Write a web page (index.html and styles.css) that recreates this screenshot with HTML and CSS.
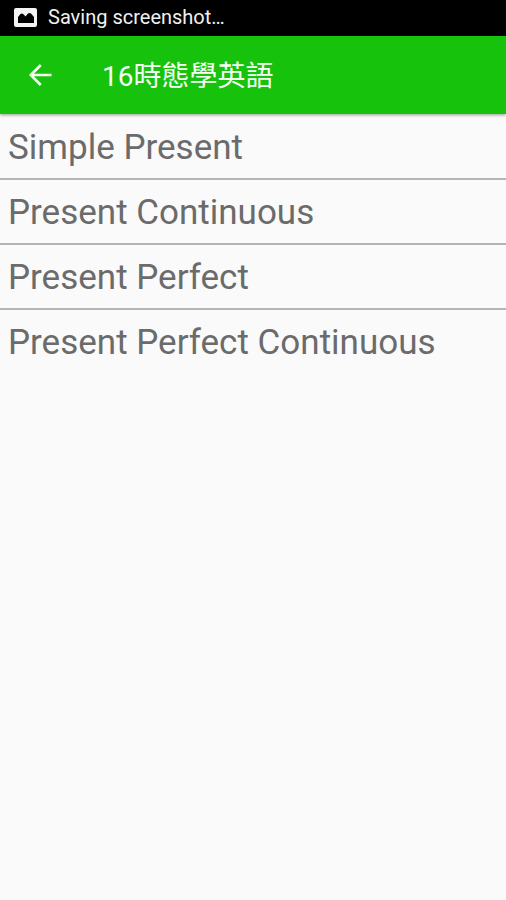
FILE: index.html
```html
<!DOCTYPE html>
<html lang="zh-Hant">
<head>
<meta charset="utf-8">
<meta name="viewport" content="width=device-width, initial-scale=1">
<title>16時態學英語</title>
<link rel="stylesheet" href="styles.css">
</head>
<body>
<div class="status" lang="en">
  <svg class="status-icon" viewBox="0 0 23 19" aria-hidden="true"><path fill="#f4f4f4" fill-rule="evenodd" d="M2 0h19a2 2 0 0 1 2 2v15a2 2 0 0 1-2 2H2a2 2 0 0 1-2-2V2a2 2 0 0 1 2-2ZM4 15h16V9L17 5.500Q15.500 4.500 14 5.500L11.500 8.500 9.500 6.200Q8 5 6.500 6L4 9Z"/></svg>
  <span>Saving screenshot…</span>
</div>
<header class="bar">
  <button class="back" type="button" aria-label="Back">
    <svg class="back-icon" viewBox="0 0 24 24" aria-hidden="true"><path fill="none" stroke="#f4fff2" stroke-width="2.600" d="M23.500 12H3M12.800 2 2.800 12l10 10"/></svg>
  </button>
  <h1 class="title">16時態學英語</h1>
</header>
<main lang="en">
  <ul class="list">
    <li class="item"><a class="link" href="#simple">Simple Present</a></li>
    <li class="item"><a class="link" href="#continuous">Present Continuous</a></li>
    <li class="item"><a class="link" href="#perfect">Present Perfect</a></li>
    <li class="item"><a class="link" href="#perfect-continuous">Present Perfect Continuous</a></li>
  </ul>
</main>
</body>
</html>
```
FILE: styles.css
```css
* { box-sizing: border-box; }
body {
  margin: 0;
  background: #fafafa;
  font-family: Roboto, "Noto Sans CJK TC", sans-serif;
}
.status {
  display: flex;
  align-items: center;
  gap: 11px;
  height: 36px;
  padding: 0 14px 2px;
  background: #000;
  color: #f0f0f0;
  font-size: 20px;
}
.status-icon { width: 23px; height: 19px; }
.bar {
  position: relative;
  display: flex;
  align-items: center;
  gap: 38px;
  height: 78px;
  padding: 0 16px;
  background: #16c20c;
  box-shadow: 0 1px 3px rgba(0, 0, 0, 0.4);
}
.back {
  display: grid;
  place-items: center;
  width: 48px;
  height: 48px;
  padding: 0;
  border: 0;
  background: none;
}
.back-icon { width: 24px; height: 24px; }
.title {
  margin: 0;
  padding-bottom: 2px;
  color: #f4fff2;
  font-size: 28px;
  font-weight: 400;
}
.list { margin: 0; padding: 1px 0 0; list-style: none; }
.item + .item { border-top: 2px solid #b4b4b4; }
.link {
  display: block;
  padding: 2px 8px 0;
  color: #6b6b6b;
  font-size: 35px;
  line-height: 61px;
  text-decoration: none;
}
```
